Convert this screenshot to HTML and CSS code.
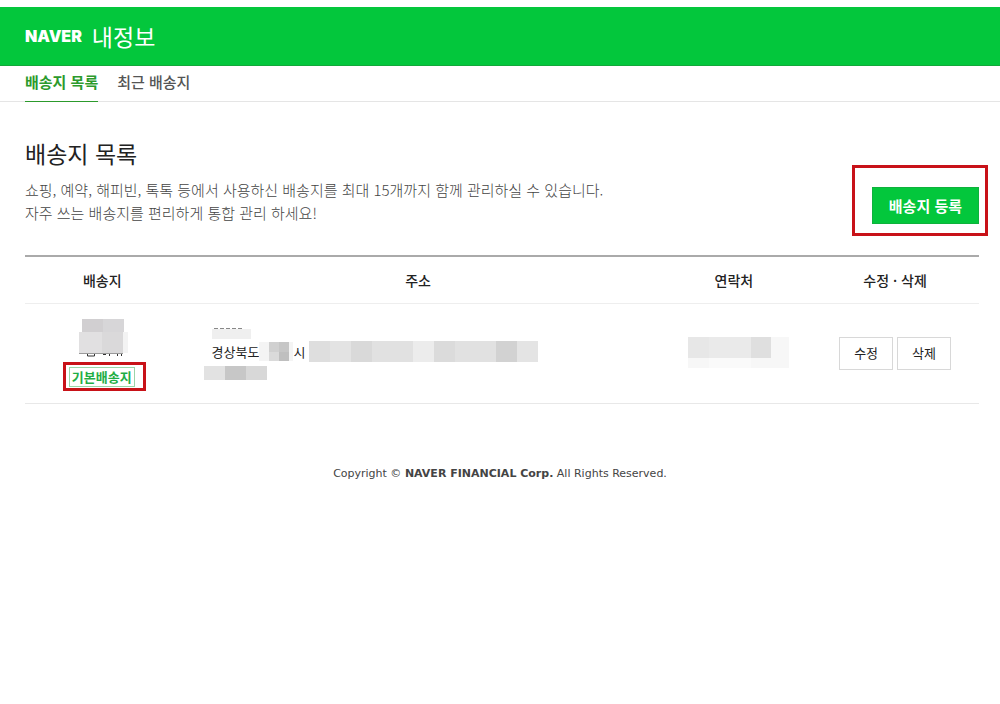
FILE: index.html
```html
<!DOCTYPE html>
<html lang="ko">
<head>
<meta charset="utf-8">
<meta name="viewport" content="width=device-width, initial-scale=1">
<title>배송지 목록</title>
<link rel="stylesheet" href="styles.css">
</head>
<body>
<header class="header">
  <a class="brand" href="#">NAVER</a>
  <a class="service" href="#">내정보</a>
</header>
<nav class="tabs">
  <a class="tab tab-active" href="#" aria-current="page">배송지 목록</a>
  <a class="tab" href="#">최근 배송지</a>
</nav>
<main class="main">
  <section class="intro">
    <div>
      <h1 class="title">배송지 목록</h1>
      <p class="desc">쇼핑, 예약, 해피빈, 톡톡 등에서 사용하신 배송지를 최대 15개까지 함께 관리하실 수 있습니다.<br>자주 쓰는 배송지를 편리하게 통합 관리 하세요!</p>
    </div>
    <div class="marked"><button class="register" type="button">배송지 등록</button></div>
  </section>
  <table class="list">
    <colgroup><col class="col-name"><col class="col-address"><col class="col-phone"><col class="col-edit"></colgroup>
    <thead>
      <tr><th scope="col">배송지</th><th scope="col">주소</th><th scope="col">연락처</th><th scope="col">수정 · 삭제</th></tr>
    </thead>
    <tbody>
      <tr>
        <td>
          <div class="recipient">
            <svg width="50" height="38" viewBox="0 0 50 38" aria-hidden="true">
              <path fill="#d1cfd1" d="M3 0h21v13H3z"/><path fill="#d7d6d8" d="M24 0h21v13H24z"/>
              <path fill="#e1e0e1" d="M0 13h23v21H0z"/><path fill="#dad9da" d="M23 13h21v21H23z"/><path fill="#f3f3f3" d="M44 13h5v21h-5z"/>
              <path fill="#999" d="M0 34h44v1H0z"/>
              <path fill="none" stroke="#333" d="M8.500 35v2h7v-2M24 35.500h3M30.500 35v2M38.500 35v2M42.500 35v2"/>
            </svg>
            <span class="default-mark"><span class="default">기본배송지</span></span>
          </div>
        </td>
        <td>
          <div class="address">
            <svg class="addr-name" width="40" height="13" viewBox="0 0 40 13" aria-hidden="true">
              <path fill="#efefef" d="M0 2h39v10H0z"/><path stroke="#888" stroke-dasharray="4 2" d="M2 1.500h30"/>
            </svg>
            <div class="addr-line">
              <span>경상북도</span>
              <svg width="34" height="21" viewBox="0 0 34 21" aria-hidden="true">
                <path fill="#f4f4f4" d="M0 1h10v19H0zM30 1h4v19h-4z"/><path fill="#d0d0d0" d="M10 1h10v10H10z"/><path fill="#c6c6c6" d="M20 1h10v10H20z"/><path fill="#dadada" d="M10 11h10v9H10z"/><path fill="#bfbfbf" d="M20 11h10v9H20z"/>
              </svg>
              <span>시</span>
              <svg class="addr-detail" width="229" height="21" viewBox="0 0 229 21" aria-hidden="true">
                <path fill="#dedede" d="M0 0h21v21H0z"/><path fill="#e3e3e3" d="M21 0h21v21H21z"/><path fill="#d9d9d9" d="M42 0h21v21H42z"/><path fill="#e1e1e1" d="M63 0h41v21H63z"/><path fill="#ececec" d="M104 0h21v21h-21z"/><path fill="#dbdbdb" d="M125 0h21v21h-21z"/><path fill="#e1e1e1" d="M146 0h41v21h-41z"/><path fill="#d2d2d2" d="M187 0h21v21h-21z"/><path fill="#e4e4e4" d="M208 0h21v21h-21z"/>
              </svg>
            </div>
            <svg class="addr-extra" width="63" height="14" viewBox="0 0 63 14" aria-hidden="true">
              <path fill="#e2e2e2" d="M0 0h21v14H0z"/><path fill="#c7c7c7" d="M21 0h21v14H21z"/><path fill="#d8d8d8" d="M42 0h21v14H42z"/>
            </svg>
          </div>
        </td>
        <td>
          <svg class="phone" width="101" height="32" viewBox="0 0 101 32" aria-hidden="true">
            <path fill="#e7e7e7" d="M0 0h21v21H0z"/><path fill="#eaeaea" d="M21 0h42v21H21z"/><path fill="#dfdfdf" d="M63 0h20v21H63z"/><path fill="#f7f7f7" d="M83 0h18v31H83zM0 21h21v10H0z"/><path fill="#fafafa" d="M21 21h42v10H21z"/><path fill="#f7f7f7" d="M63 21h20v10H63z"/>
          </svg>
        </td>
        <td>
          <div class="actions"><button class="action" type="button">수정</button><button class="action" type="button">삭제</button></div>
        </td>
      </tr>
    </tbody>
  </table>
</main>
<footer class="footer">Copyright © <strong>NAVER FINANCIAL Corp.</strong> All Rights Reserved.</footer>
</body>
</html>
```
FILE: styles.css
```css
* { box-sizing: border-box; }
body {
  margin: 0;
  padding-top: 7px;
  background: #fff;
  color: #222;
  font: 13px/20px "Noto Sans CJK KR", sans-serif;
}
a { color: inherit; text-decoration: none; }
svg { display: block; flex: none; }
button { font-family: inherit; cursor: pointer; }

.header {
  display: flex;
  align-items: center;
  gap: 10px;
  height: 59px;
  padding: 0 25px;
  border-bottom: 1px solid #12a83a;
  background: #03c73c;
  color: #fff;
}
.brand { font: 900 16px/20px Inter, sans-serif; }
.service { font-size: 23px; line-height: 32px; font-weight: 400; }

.tabs {
  display: flex;
  gap: 19px;
  padding: 0 25px;
  border-bottom: 1px solid #e5e5e5;
  color: #555;
  font-size: 15px;
  font-weight: 500;
}
.tab {
  margin-bottom: -1px;
  padding: 6px 0 9px;
  border-bottom: 1px solid transparent;
}
.tab-active { border-bottom-color: #2c9a2c; color: #2c9a2c; font-weight: 700; }

.main { padding: 34px 21px 0 25px; }
.intro {
  display: flex;
  justify-content: space-between;
  align-items: flex-end;
  padding-bottom: 31px;
}
.title { margin: 0; font-size: 23px; line-height: 34px; font-weight: 400; }
.desc { margin: 8px 0 0; color: #444; font-size: 15px; line-height: 23px; font-weight: 300; }
.marked { position: relative; flex: none; }
.marked::after {
  content: "";
  position: absolute;
  inset: -22px -9px -12px -20px;
  border: 3px solid #c81218;
  pointer-events: none;
}
.register {
  display: block;
  padding: 8px 16px;
  border: 1px solid #0eb23c;
  background: #03c73c;
  color: #fff;
  font-size: 15px;
  line-height: 19px;
  font-weight: 700;
}

.list {
  width: 100%;
  border-collapse: collapse;
  border-top: 2px solid #aaa;
  table-layout: fixed;
}
.col-name { width: 16.2%; }
.col-phone { width: 16.2%; }
.col-edit { width: 17.6%; }
.list th { height: 47px; padding: 0; border-bottom: 1px solid #eee; font-size: 14px; font-weight: 500; }
.list td { height: 100px; padding: 0; border-bottom: 1px solid #e8e8e8; }

.recipient { display: flex; flex-direction: column; align-items: center; gap: 5px; padding: 4px 0 0 4px; }
.default-mark { padding: 2px 8px 1px 3px; border: 3px solid #c81218; }
.default {
  display: block;
  padding: 0 2px;
  border: 1px solid #9bd5a8;
  color: #1fae45;
  font-weight: 700;
  line-height: 18px;
}
.address { padding-left: 32px; }
.addr-line { display: flex; align-items: center; height: 24px; }
.addr-detail { margin-left: 4px; }
.addr-extra { margin-left: -8px; margin-top: 2px; }
.phone { margin: 0 auto; padding-left: 10px; box-sizing: content-box; }
.actions { display: flex; justify-content: center; gap: 4px; }
.action {
  height: 33px;
  padding: 0 14px;
  border: 1px solid #d8d8d8;
  background: #fff;
  color: #222;
  font-size: 13px;
  line-height: 20px;
}

.footer {
  padding: 60px 0 20px;
  color: #444;
  font: 11px/20px "DejaVu Sans", sans-serif;
  text-align: center;
}
```
